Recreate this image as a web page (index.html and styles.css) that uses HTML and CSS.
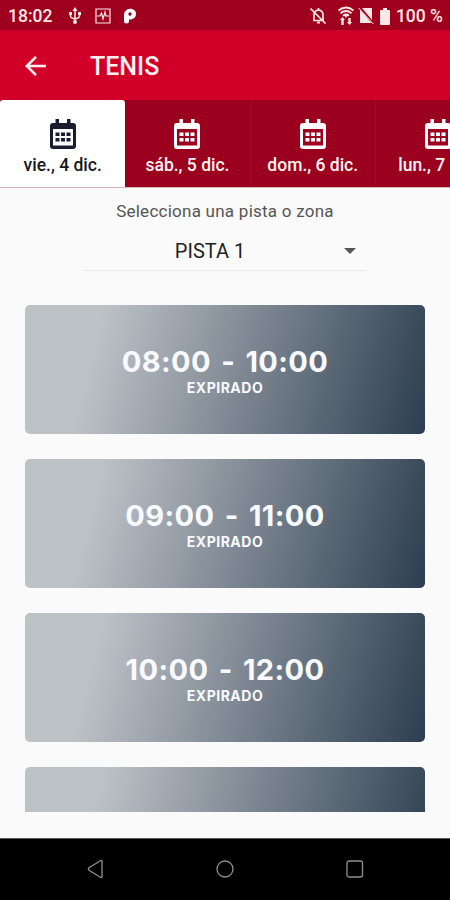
FILE: index.html
```
<!DOCTYPE html>
<html lang="es">
<head>
<meta charset="utf-8">
<title>Tenis</title>
<link rel="stylesheet" href="styles.css">
</head>
<body>
<svg class="defs" aria-hidden="true">
  <symbol id="calendar" viewBox="0 0 28 32">
    <path fill="currentColor" fill-rule="evenodd" d="M6.500 1h3.500v4h8V1h3.500v4h2.500a3 3 0 0 1 3 3v20a3 3 0 0 1-3 3H4a3 3 0 0 1-3-3V8a3 3 0 0 1 3-3h2.500zM4 11v16.500h20V11zM6.500 14.500h4v3.500h-4zm5.500 0h4v3.500h-4zm5.500 0h4v3.500h-4zM6.500 20h4v3.500h-4zm5.500 0h4v3.500h-4zm5.500 0h4v3.500h-4z"/>
  </symbol>
</svg>
<div class="screen">
  <div class="status">
    <span class="clock">18:02</span>
    <svg class="usb" width="14" height="18" viewBox="0 0 14 18" fill="none" stroke="currentColor" stroke-width="1.500"><path d="M7 3v12M2.500 6v3q0 2 4.500 3M11.500 6v3q0 2-4.500 3"/><path fill="currentColor" stroke="none" d="M7 0l2.500 4h-5zM1 5h3v3H1zM10 5h3v3h-3z"/><circle cx="7" cy="15" r="2" fill="currentColor" stroke="none"/></svg>
    <svg class="pulse" width="16" height="16" viewBox="0 0 16 16" fill="none" stroke="currentColor" stroke-width="1.200"><path d="M1 1h14v14H1zM2 8h3l1.500-3L8 11l2-7 1 4h3"/></svg>
    <svg class="park" width="14" height="16" viewBox="0 0 14 16"><path fill="currentColor" fill-rule="evenodd" d="M1 12V6.500A6 6 0 0 1 7 .7c4 0 6 2.300 6 5.300s-2.500 5.500-6 5.500H6V13a2 2 0 0 1-5 0zM6 7.700h1a1.700 1.700 0 1 0-1.700-1.700z"/></svg>
    <span class="spacer"></span>
    <svg class="bell" width="18" height="18" viewBox="0 0 18 18" fill="none" stroke="currentColor" stroke-width="1.700"><path d="M4 13.500h11M5 13.500V8q0-4.500 4.500-5 4.500.5 4.500 5v5.500M9.500 1v2M1.500 1.500l15 15"/><path d="M8 15.500h3" stroke-width="2"/></svg>
    <svg class="wifi" width="18" height="20" viewBox="0 0 18 20" fill="none" stroke="currentColor" stroke-width="1.800"><path d="M1.500 4.500q7.500-6 15 0M3.500 7.200q5.500-4.400 11 0M6 9.700q3-2.500 6 0"/><path fill="currentColor" stroke="none" d="M6.500 8.500h5L9 12zM5.500 11l2.500 3H6.700v5H4.300v-5H3zM12.500 19l-2.500-3h1.300v-4h2.400v4H15z"/></svg>
    <svg class="sim" width="16" height="18" viewBox="0 0 16 18"><path fill="currentColor" d="M4 1h10v12zM2 2.800L13.500 16H2z"/><path d="M.7 1l14.600 16" stroke="currentColor" stroke-width="1"/></svg>
    <svg class="battery" width="10" height="17" viewBox="0 0 10 17"><path fill="currentColor" d="M3 0h4v2h2q1 0 1 1v13q0 1-1 1H1q-1 0-1-1V3q0-1 1-1h2z"/></svg>
    <span class="level">100 %</span>
  </div>
  <header class="appbar">
    <svg width="22" height="22" viewBox="0 0 22 22" fill="none" stroke="currentColor" stroke-width="2.600"><path d="M21 11H2.500M11 1.800L1.800 11l9.200 9.200"/></svg>
    <h1>TENIS</h1>
  </header>
  <nav class="tabs">
    <div class="tab active"><svg><use href="#calendar"/></svg><span>vie., 4 dic.</span></div>
    <div class="tab"><svg><use href="#calendar"/></svg><span>sáb., 5 dic.</span></div>
    <div class="tab"><svg><use href="#calendar"/></svg><span>dom., 6 dic.</span></div>
    <div class="tab"><svg><use href="#calendar"/></svg><span>lun., 7 dic.</span></div>
  </nav>
  <div class="label">Selecciona una pista o zona</div>
  <div class="select"><span>PISTA 1</span><i class="caret"></i></div>
  <main class="slots">
    <div class="slot"><div class="time">08:00 - 10:00</div><div class="state">EXPIRADO</div></div>
    <div class="slot"><div class="time">09:00 - 11:00</div><div class="state">EXPIRADO</div></div>
    <div class="slot"><div class="time">10:00 - 12:00</div><div class="state">EXPIRADO</div></div>
    <div class="slot"></div>
  </main>
  <footer class="navbar">
    <svg width="18" height="20" viewBox="0 0 18 20"><path d="M15 2.200v15.600q0 1.200-1.200.7L2 11.200q-1.200-1.200 0-2.400L13.800 1.500q1.200-.5 1.200.7z"/></svg>
    <svg width="20" height="20" viewBox="0 0 20 20"><circle cx="10" cy="10" r="8"/></svg>
    <svg width="20" height="20" viewBox="0 0 20 20"><rect x="2" y="2" width="15.500" height="16" rx="2"/></svg>
  </footer>
</div>
</body>
</html>
```
FILE: styles.css
```
* { box-sizing: border-box; }
body { margin: 0; font-family: Roboto, sans-serif; background: #fafafa; }
svg { display: block; flex: none; }
.defs { display: none; }
.screen { width: 450px; height: 900px; display: flex; flex-direction: column; overflow: hidden; }
.screen > * { flex: none; }
.status { height: 30px; background: #9f001d; color: #ffe9e6; display: flex; align-items: center; padding: 2px 7px 0 8px; font-size: 17.500px; font-weight: 500; }
.spacer { flex: 1; }
.clock { width: 60px; }
.pulse { margin-left: 13px; }
.park { margin-left: 12px; color: #fff; }
.wifi { margin-left: 10px; }
.sim { margin-left: 3px; }
.battery { margin-left: 6px; }
.level { margin-left: 6px; }
.appbar { height: 70px; background: #d10029; color: #fff0ee; display: flex; align-items: center; padding: 2px 0 0 25px; }
.appbar h1 { margin: 2px 0 0 43px; font-size: 25px; font-weight: 500; line-height: 30px; }
.tabs { height: 88px; display: flex; background: #9b001e; border-bottom: 1px solid #dfb2b9; }
.tab { flex: none; width: 125.300px; display: flex; flex-direction: column; align-items: center; padding-top: 18px; color: #fff3f1; font-size: 17.500px; font-weight: 500; line-height: 22px; border-right: 1px solid #a30a25; white-space: nowrap; }
.tab svg { width: 28px; height: 32px; margin-bottom: 4px; color: #fff; }
.tab.active { background: #fff; color: #17191f; border-radius: 3px 3px 0 0; border: 0; }
.tab.active svg { color: #171d2d; }
.label { height: 42px; padding-top: 12px; text-align: center; font-size: 17px; line-height: 22px; letter-spacing: .25px; color: #555; }
.select { width: 282px; height: 41px; margin: 0 auto; display: flex; align-items: center; padding: 2px 10px 0 0; border-bottom: 1px solid #e8e8e8; color: #222; font-size: 20px; }
.select span { flex: 1; text-align: center; padding-right: 8px; }
.caret { border: 6px solid transparent; border-top-color: #555; border-bottom: 0; }
.slots { height: 507px; margin-top: 34px; padding: 0 25px; display: flex; flex-direction: column; gap: 25.500px; overflow: hidden; }
.slot { flex: none; height: 128.500px; border-radius: 5px; padding-top: 38px; text-align: center; color: #f8faff; font-family: Inter, sans-serif; background: linear-gradient(104.500deg, #bdc3c5 0%, #bcc2c5 18%, #b2b7be 25%, #2c3e50 100%); }
.time { font-size: 29px; font-weight: 650; line-height: 37px; letter-spacing: .4px; word-spacing: 3px; }
.state { font-size: 14px; font-weight: 700; line-height: 16px; letter-spacing: .5px; }
.navbar { flex: none; height: 62px; margin-top: 26px; background: #000; border-top: 1px solid #555; display: flex; align-items: center; justify-content: space-between; padding: 0 85px 2px 87px; }
.navbar svg { fill: none; stroke: #909090; stroke-width: 1.300; }
```
